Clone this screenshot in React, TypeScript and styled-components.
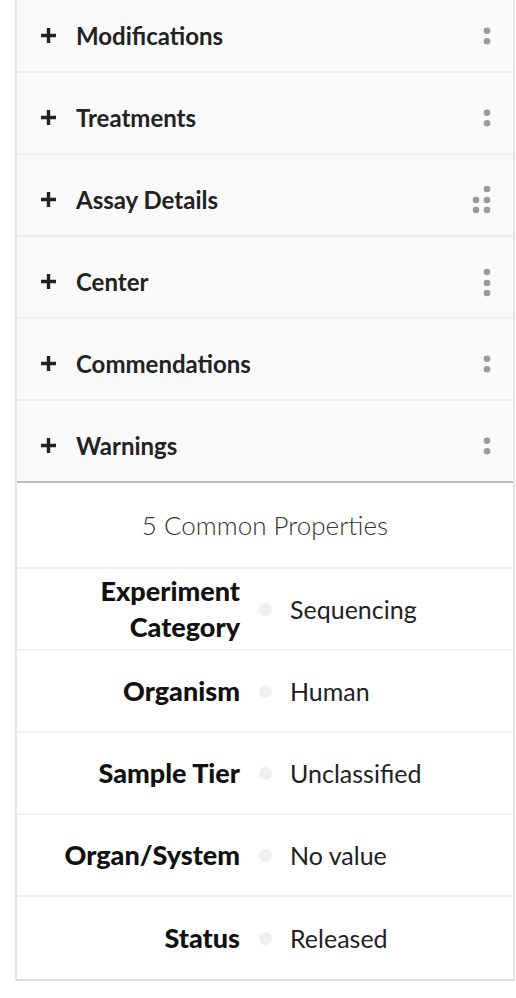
import React from "react";
import styled, { createGlobalStyle } from "styled-components";

const GlobalStyle = createGlobalStyle`
  html, body { margin: 0; padding: 0; background: #ffffff; }
  body { font-family: Lato, "Open Sans", "Liberation Sans", sans-serif; color: #222; }
`;

const Panel = styled.div`
  margin: -9px 0 0 15px;
  width: 500px;
  box-sizing: border-box;
  border-left: 2px solid #e6e6e6;
  border-right: 2px solid #e6e6e6;
  border-bottom: 2px solid #dcdcdc;
  background: #fff;
`;

const SectionRow = styled.div<{ $last?: boolean }>`
  display: flex;
  align-items: center;
  height: 82px;
  box-sizing: border-box;
  padding: 9px 20px 0 23px;
  background: #fafafa;
  border-bottom: 2px solid ${(p) => (p.$last ? "#bdbdbd" : "#efefef")};
`;

const PlusIcon = styled.svg`
  width: 17px;
  height: 17px;
  flex: none;
  margin-right: 19px;
`;

const SectionTitle = styled.span`
  flex: 1;
  font-size: 24px;
  font-weight: 700;
  color: #222;
`;

const DotsIcon = styled.svg`
  width: 24px;
  height: 30px;
  flex: none;
`;

const Header = styled.div`
  height: 86px;
  box-sizing: border-box;
  display: flex;
  align-items: center;
  justify-content: center;
  font-size: 26px;
  font-weight: 300;
  color: #333;
  border-bottom: 2px solid #efefef;
`;

const PropRow = styled.div<{ $last?: boolean }>`
  display: grid;
  grid-template-columns: 1fr 50px 1fr;
  align-items: center;
  height: 82px;
  box-sizing: border-box;
  border-bottom: ${(p) => (p.$last ? "none" : "2px solid #efefef")};
`;

const PropLabel = styled.div`
  justify-self: end;
  text-align: right;
  font-size: 27px;
  font-weight: 900;
  color: #111;
  line-height: 36px;
  max-width: 180px;
`;

const PropDot = styled.span`
  justify-self: center;
  width: 13px;
  height: 13px;
  border-radius: 50%;
  background: #f0f0f0;
`;

const PropValue = styled.div`
  font-size: 25px;
  font-weight: 400;
  color: #222;
`;

type DotsKind = "two" | "three" | "five";

const Dots: React.FC<{ kind: DotsKind }> = ({ kind }) => {
  const pts: [number, number][] =
    kind === "two"
      ? [[18, 9.7], [18, 20.3]]
      : kind === "three"
      ? [[18, 5], [18, 16], [18, 26]]
      : [[18, 4], [7, 15], [18, 15], [7, 25], [18, 25]];
  return (
    <DotsIcon viewBox="0 0 24 30">
      {pts.map(([x, y], i) => (
        <circle key={i} cx={x} cy={y} r={3.3} fill="#9a9a9a" />
      ))}
    </DotsIcon>
  );
};

const Plus = () => (
  <PlusIcon viewBox="0 0 17 17">
    <path d="M8.5 1v15M1 8.5h15" stroke="#222" strokeWidth="3.4" />
  </PlusIcon>
);

const sections: { title: string; dots: DotsKind }[] = [
  { title: "Modifications", dots: "two" },
  { title: "Treatments", dots: "two" },
  { title: "Assay Details", dots: "five" },
  { title: "Center", dots: "three" },
  { title: "Commendations", dots: "two" },
  { title: "Warnings", dots: "two" },
];

const props: { label: string; value: string }[] = [
  { label: "Experiment Category", value: "Sequencing" },
  { label: "Organism", value: "Human" },
  { label: "Sample Tier", value: "Unclassified" },
  { label: "Organ/System", value: "No value" },
  { label: "Status", value: "Released" },
];

export default function App() {
  return (
    <>
      <GlobalStyle />
      <Panel>
        {sections.map((s, i) => (
          <SectionRow key={s.title} $last={i === sections.length - 1}>
            <Plus />
            <SectionTitle>{s.title}</SectionTitle>
            <Dots kind={s.dots} />
          </SectionRow>
        ))}
        <Header>5 Common Properties</Header>
        {props.map((p, i) => (
          <PropRow key={p.label} $last={i === props.length - 1}>
            <PropLabel>{p.label}</PropLabel>
            <PropDot />
            <PropValue>{p.value}</PropValue>
          </PropRow>
        ))}
      </Panel>
    </>
  );
}
